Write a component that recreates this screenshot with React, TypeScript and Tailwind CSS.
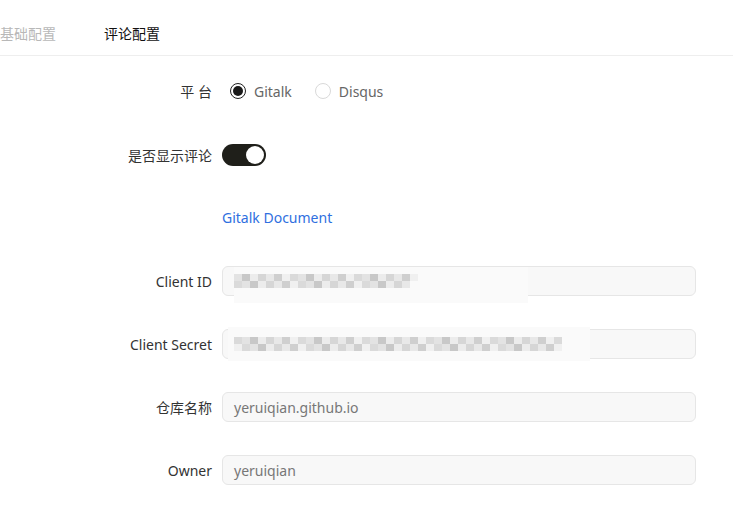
import React from "react";

const font = { fontFamily: '"Segoe UI", "Noto Sans", "Noto Sans CJK SC", sans-serif' };

function Blur({ rows, seed }: { rows: number[]; seed: number }) {
  const greys = ["#d6d6d6", "#e3e3e3", "#cfcfcf", "#ececec", "#dadada", "#e8e8e8", "#c8c8c8", "#f0f0f0"];
  return (
    <div className="flex flex-col">
      {rows.map((count, r) => (
        <div key={r} className="flex h-[7px]">
          {Array.from({ length: count }).map((_, i) => (
            <div
              key={i}
              className="h-[7px] w-[8px]"
              style={{ backgroundColor: greys[(i * 5 + r * 3 + seed) % greys.length] }}
            />
          ))}
        </div>
      ))}
    </div>
  );
}

function Row({ label, children, className = "" }: { label: string; children: React.ReactNode; className?: string }) {
  return (
    <div className={`flex items-center ${className}`}>
      <div className="w-[212px] pr-0 text-right text-[14px] text-[#333]">{label}</div>
      <div className="ml-[10px] flex-1">{children}</div>
    </div>
  );
}

function Input({ value, children }: { value?: string; children?: React.ReactNode }) {
  return (
    <div className="relative flex h-[30px] w-[474px] items-center rounded-[6px] border border-[#e6e6e6] bg-[#f8f8f8] px-[11px] text-[14px] text-[#777]">
      {value}
      {children}
    </div>
  );
}

export default function App() {
  return (
    <div className="h-[515px] w-[733px] bg-white" style={font}>
      <div className="flex h-[56px] items-end border-b border-[#eeeeee] pb-[11px] text-[14px]">
        <span className="text-[#b8b8b8]">基础配置</span>
        <span className="ml-[48px] text-[#111]">评论配置</span>
      </div>

      <Row label="平 台" className="mt-[23px] h-[24px]">
        <div className="ml-[8px] flex items-center text-[14px] text-[#666]">
          <span className="flex h-[16px] w-[16px] items-center justify-center rounded-full border border-[#222] bg-white">
            <span className="h-[10px] w-[10px] rounded-full bg-[#1a1a1a]" />
          </span>
          <span className="ml-[8px]">Gitalk</span>
          <span className="ml-[23px] h-[16px] w-[16px] rounded-full border border-[#d9d9d9] bg-white" />
          <span className="ml-[8px]">Disqus</span>
        </div>
      </Row>

      <Row label="是否显示评论" className="mt-[40px] h-[24px]">
        <div className="flex h-[22px] w-[44px] items-center justify-end rounded-full bg-[#1f1f1a] pr-[2px]">
          <span className="h-[18px] w-[18px] rounded-full bg-white" />
        </div>
      </Row>

      <Row label="" className="mt-[38px] h-[24px]">
        <span className="text-[14px] text-[#2f6fe0]">Gitalk Document</span>
      </Row>

      <Row label="Client ID" className="mt-[37px]">
        <Input>
          <div className="absolute left-[11px] top-0 h-[36px] w-[294px] bg-[#fafafa]" />
          <div className="relative">
            <Blur rows={[23, 22]} seed={1} />
          </div>
        </Input>
      </Row>

      <Row label="Client Secret" className="mt-[33px]">
        <Input>
          <div className="absolute left-[5px] top-[-3px] h-[34px] w-[362px] bg-[#fafafa]" />
          <div className="relative">
            <Blur rows={[41, 41]} seed={4} />
          </div>
        </Input>
      </Row>

      <Row label="仓库名称" className="mt-[33px]">
        <Input value="yeruiqian.github.io" />
      </Row>

      <Row label="Owner" className="mt-[33px]">
        <Input value="yeruiqian" />
      </Row>
    </div>
  );
}
